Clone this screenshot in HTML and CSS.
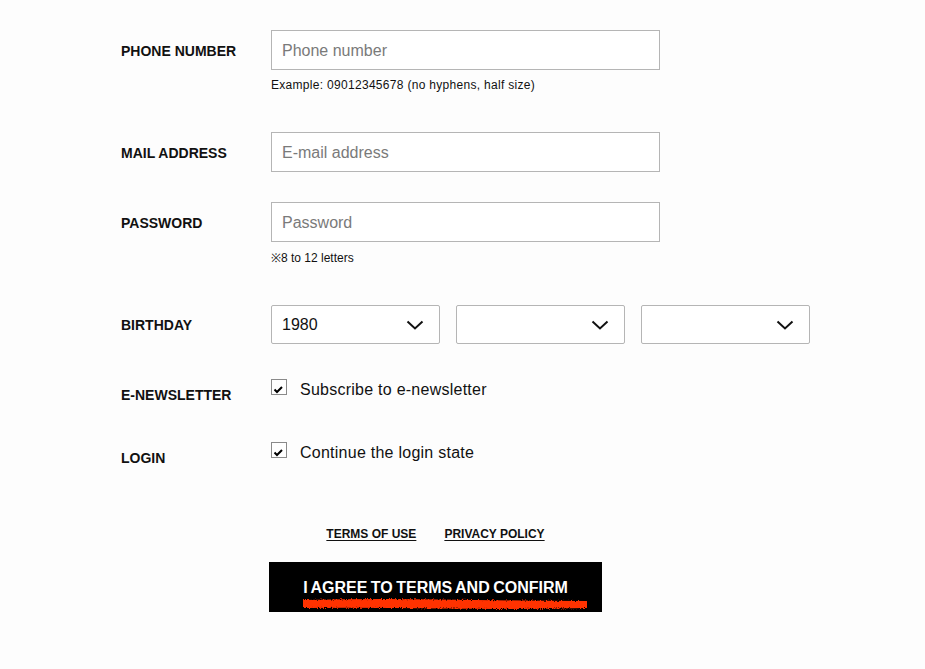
FILE: index.html
```html
<!DOCTYPE html>
<html lang="en">
<head>
<meta charset="utf-8">
<title>Register</title>
<link rel="stylesheet" href="styles.css">
</head>
<body>
<form class="form">
  <div class="row row-phone">
    <label class="label">PHONE NUMBER</label>
    <div class="field">
      <input class="text-input" type="text" placeholder="Phone number">
      <p class="help help-wide">Example: 09012345678 (no hyphens, half size)</p>
    </div>
  </div>
  <div class="row row-mail">
    <label class="label">MAIL ADDRESS</label>
    <div class="field">
      <input class="text-input" type="text" placeholder="E-mail address">
    </div>
  </div>
  <div class="row row-pass">
    <label class="label">PASSWORD</label>
    <div class="field">
      <input class="text-input" type="password" placeholder="Password">
      <p class="help help-small">※8 to 12 letters</p>
    </div>
  </div>
  <div class="row row-birth">
    <label class="label">BIRTHDAY</label>
    <div class="selects">
      <div class="select"><span class="select-value">1980</span><svg class="chev" width="18" height="10" viewBox="0 0 18 10"><path d="M1.5 1.5 L9 8.5 L16.5 1.5" fill="none" stroke="#111" stroke-width="2"/></svg></div>
      <div class="select"><span class="select-value"></span><svg class="chev" width="18" height="10" viewBox="0 0 18 10"><path d="M1.5 1.5 L9 8.5 L16.5 1.5" fill="none" stroke="#111" stroke-width="2"/></svg></div>
      <div class="select"><span class="select-value"></span><svg class="chev" width="18" height="10" viewBox="0 0 18 10"><path d="M1.5 1.5 L9 8.5 L16.5 1.5" fill="none" stroke="#111" stroke-width="2"/></svg></div>
    </div>
  </div>
  <div class="row row-check row-news">
    <label class="label label-check">E-NEWSLETTER</label>
    <div class="check">
      <span class="box"><svg width="16" height="16" viewBox="0 0 16 16"><path d="M3.5 10.5 L6 13 L11 8" fill="none" stroke="#000" stroke-width="2"/></svg></span>
      <span class="check-text">Subscribe to e-newsletter</span>
    </div>
  </div>
  <div class="row row-check row-login">
    <label class="label label-check">LOGIN</label>
    <div class="check">
      <span class="box"><svg width="16" height="16" viewBox="0 0 16 16"><path d="M3.5 10.5 L6 13 L11 8" fill="none" stroke="#000" stroke-width="2"/></svg></span>
      <span class="check-text">Continue the login state</span>
    </div>
  </div>
  <div class="actions">
    <div class="links">
      <a class="link" href="#">TERMS OF USE</a>
      <a class="link" href="#">PRIVACY POLICY</a>
    </div>
    <button class="confirm" type="button">
      <span class="confirm-text">I AGREE TO TERMS AND CONFIRM</span>
      <svg class="scribble" width="292" height="16" viewBox="0 0 292 16">
        <defs>
          <filter id="rough" x="-5%" y="-60%" width="110%" height="220%">
            <feTurbulence type="fractalNoise" baseFrequency="0.8" numOctaves="2" seed="5" result="n"/>
            <feDisplacementMap in="SourceGraphic" in2="n" scale="4"/>
          </filter>
        </defs>
        <path d="M3 4 Q70 2.5 140 3.5 T287 5 L287 12 Q210 13.5 140 12.5 T3 12 Z" fill="#ff3000" filter="url(#rough)"/>
      </svg>
    </button>
  </div>
</form>
</body>
</html>
```

FILE: styles.css
```css
html, body {
  margin: 0;
  padding: 0;
  background: #fdfdfd;
}
body {
  font-family: "Liberation Sans", Arial, sans-serif;
  color: #111;
}
.form {
  padding: 30px 0 0 121px;
}
.row {
  display: grid;
  grid-template-columns: 150px 389px;
  align-items: start;
}
.label {
  font-size: 14px;
  font-weight: bold;
  line-height: 42px;
  height: 40px;
  color: #111;
}
.field {
  display: flex;
  flex-direction: column;
}
.text-input {
  box-sizing: border-box;
  width: 389px;
  height: 40px;
  border: 1px solid #b5b5b5;
  border-radius: 0;
  background: #fff;
  padding: 1px 10px 0;
  font-family: "Liberation Sans", Arial, sans-serif;
  font-size: 16px;
  color: #111;
  outline: none;
}
.text-input::placeholder {
  color: #7a7a7a;
}
.help {
  margin: 8px 0 0;
  font-size: 12px;
  line-height: 15px;
  color: #111;
}
.help-wide {
  letter-spacing: 0.3px;
}
.help-small {
  margin-top: 9px;
}
.row-phone { margin-bottom: 39px; }
.row-mail { margin-bottom: 30px; }
.row-pass { margin-bottom: 39px; }
.row-birth { margin-bottom: 35px; }
.row-birth .label { line-height: 41px; height: 39px; }
.selects {
  display: flex;
  gap: 16px;
}
.select {
  box-sizing: border-box;
  flex: 0 0 169px;
  height: 39px;
  border: 1px solid #b5b5b5;
  border-radius: 2px;
  background: #fff;
  display: flex;
  align-items: center;
  justify-content: space-between;
  padding: 0 15px 0 10px;
  font-size: 16px;
  color: #111;
}
.chev { display: block; }
.row-check .label-check {
  height: 22px;
  line-height: 22px;
  padding-top: 5px;
}
.row-news { margin-bottom: 36px; }
.check {
  display: flex;
  align-items: flex-start;
  gap: 13px;
}
.box {
  box-sizing: border-box;
  width: 16px;
  height: 16px;
  border: 1px solid #8a8a8a;
  background: #fff;
  display: block;
  position: relative;
}
.box svg {
  position: absolute;
  left: -1px;
  top: -1px;
}
.check-text {
  font-size: 16px;
  line-height: 22px;
  letter-spacing: 0.25px;
  color: #111;
}
.actions {
  margin: 58px 0 0 148px;
  width: 333px;
  display: flex;
  flex-direction: column;
  align-items: center;
}
.links {
  display: flex;
  gap: 28px;
  font-size: 12px;
  line-height: 14px;
  margin-bottom: 21px;
}
.link {
  color: #111;
  font-weight: bold;
  text-decoration: underline;
  text-underline-offset: 2px;
}
.confirm {
  box-sizing: border-box;
  width: 333px;
  height: 50px;
  border: 0;
  border-radius: 0;
  background: #000;
  padding: 0;
  display: flex;
  flex-direction: column;
  align-items: center;
  position: relative;
  cursor: pointer;
}
.confirm-text {
  margin-top: 17px;
  color: #fff;
  font-family: "Liberation Sans", Arial, sans-serif;
  font-weight: bold;
  font-size: 16px;
  line-height: 18px;
  word-spacing: -1px;
}
.scribble {
  position: absolute;
  left: 31px;
  top: 34px;
}
```
